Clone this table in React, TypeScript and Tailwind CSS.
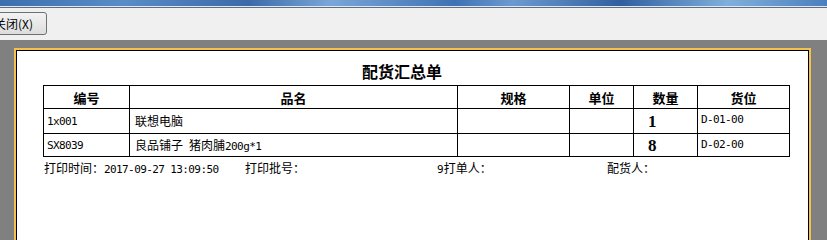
import React from "react";

const cjk = { fontFamily: '"Noto Sans CJK SC", "Liberation Sans", sans-serif' };
const mono = { fontFamily: '"DejaVu Sans Mono", "Liberation Mono", "Noto Sans CJK SC", monospace' };

export default function App() {
  const rows = [
    { code: "1x001", name: <>联想电脑</>, qty: "1", loc: "D-01-00", h: "h-[25px]" },
    {
      code: "SX8039",
      name: (
        <>
          良品铺子<span className="text-[11px] tracking-[-0.6px]" style={mono}> </span>猪肉脯<span className="text-[11px] tracking-[-0.6px]" style={mono}>200g*1</span>
        </>
      ),
      qty: "8",
      loc: "D-02-00",
      h: "h-[23px]",
    },
  ];
  return (
    <div className="w-[827px] h-[240px] overflow-hidden bg-[#808080] flex flex-col" style={cjk}>
      <div className="h-[6px] bg-[linear-gradient(90deg,#3d6fae_0%,#5a8cc8_15%,#3a6aa8_30%,#7aa6d8_40%,#3f72b4_55%,#6c9ad0_62%,#2f5f9f_75%,#7fb0dc_88%,#4b7fbe_100%)]" />
      <div className="h-px bg-[#dfe8f3]" />
      <div className="h-px bg-[#5d6f86]" />
      <div className="h-[32px] bg-[#f0f0f0] pt-[4px]">
        <div className="ml-[-30px] w-[77px] h-[23px] rounded-[3px] border border-[#707070] bg-[linear-gradient(#f2f2f2,#e8e8e8_50%,#dddddd)] flex items-center justify-end pr-[13px] text-[12px] text-black leading-none">
          关闭(X)
        </div>
      </div>
      <div className="flex-1 pt-[8px] pl-[14px] pr-[16px]">
        <div className="h-full border-2 border-b-0 border-[#f2c14e]">
          <div className="h-full border border-b-0 border-black bg-white pl-[26px] pt-[10px]">
            <div className="w-[718px] text-center text-[16px] font-bold leading-[20px] text-black">配货汇总单</div>
            <table className="mt-[4px] border-collapse text-black table-fixed w-[746px]">
              <colgroup>
                <col className="w-[86px]" />
                <col className="w-[328px]" />
                <col className="w-[112px]" />
                <col className="w-[64px]" />
                <col className="w-[64px]" />
                <col className="w-[92px]" />
              </colgroup>
              <thead>
                <tr className="h-[23px]">
                  {["编号", "品名", "规格", "单位", "数量", "货位"].map((t) => (
                    <th key={t} className="border border-black text-[13px] font-bold text-center p-0 leading-none">
                      {t}
                    </th>
                  ))}
                </tr>
              </thead>
              <tbody>
                {rows.map((r) => (
                  <tr key={r.code} className={r.h}>
                    <td className="border border-black p-0 pl-[3px] text-[11px] tracking-[-0.6px] leading-none" style={mono}>{r.code}</td>
                    <td className="border border-black p-0 pl-[5px] text-[12px] leading-none whitespace-pre">{r.name}</td>
                    <td className="border border-black p-0" />
                    <td className="border border-black p-0" />
                    <td className="border border-black p-0 pl-[14px] text-[17px] font-bold leading-none" style={{ fontFamily: '"Liberation Serif", serif' }}>{r.qty}</td>
                    <td className="border border-black p-0 pl-[3px] text-[11px] tracking-[-0.6px] leading-none align-top pt-[5px]" style={mono}>{r.loc}</td>
                  </tr>
                ))}
              </tbody>
            </table>
            <div className="mt-[4px] ml-[1px] flex text-[12px] leading-[14px] text-black">
              <span className="w-[201px] whitespace-pre">打印时间：<span className="text-[11px] tracking-[-0.6px]" style={mono}>2017-09-27 13:09:50</span></span>
              <span className="w-[192px]">打印批号：</span>
              <span className="w-[170px]"><span className="text-[11px]" style={mono}>9</span>打单人：</span>
              <span>配货人：</span>
            </div>
          </div>
        </div>
      </div>
    </div>
  );
}
